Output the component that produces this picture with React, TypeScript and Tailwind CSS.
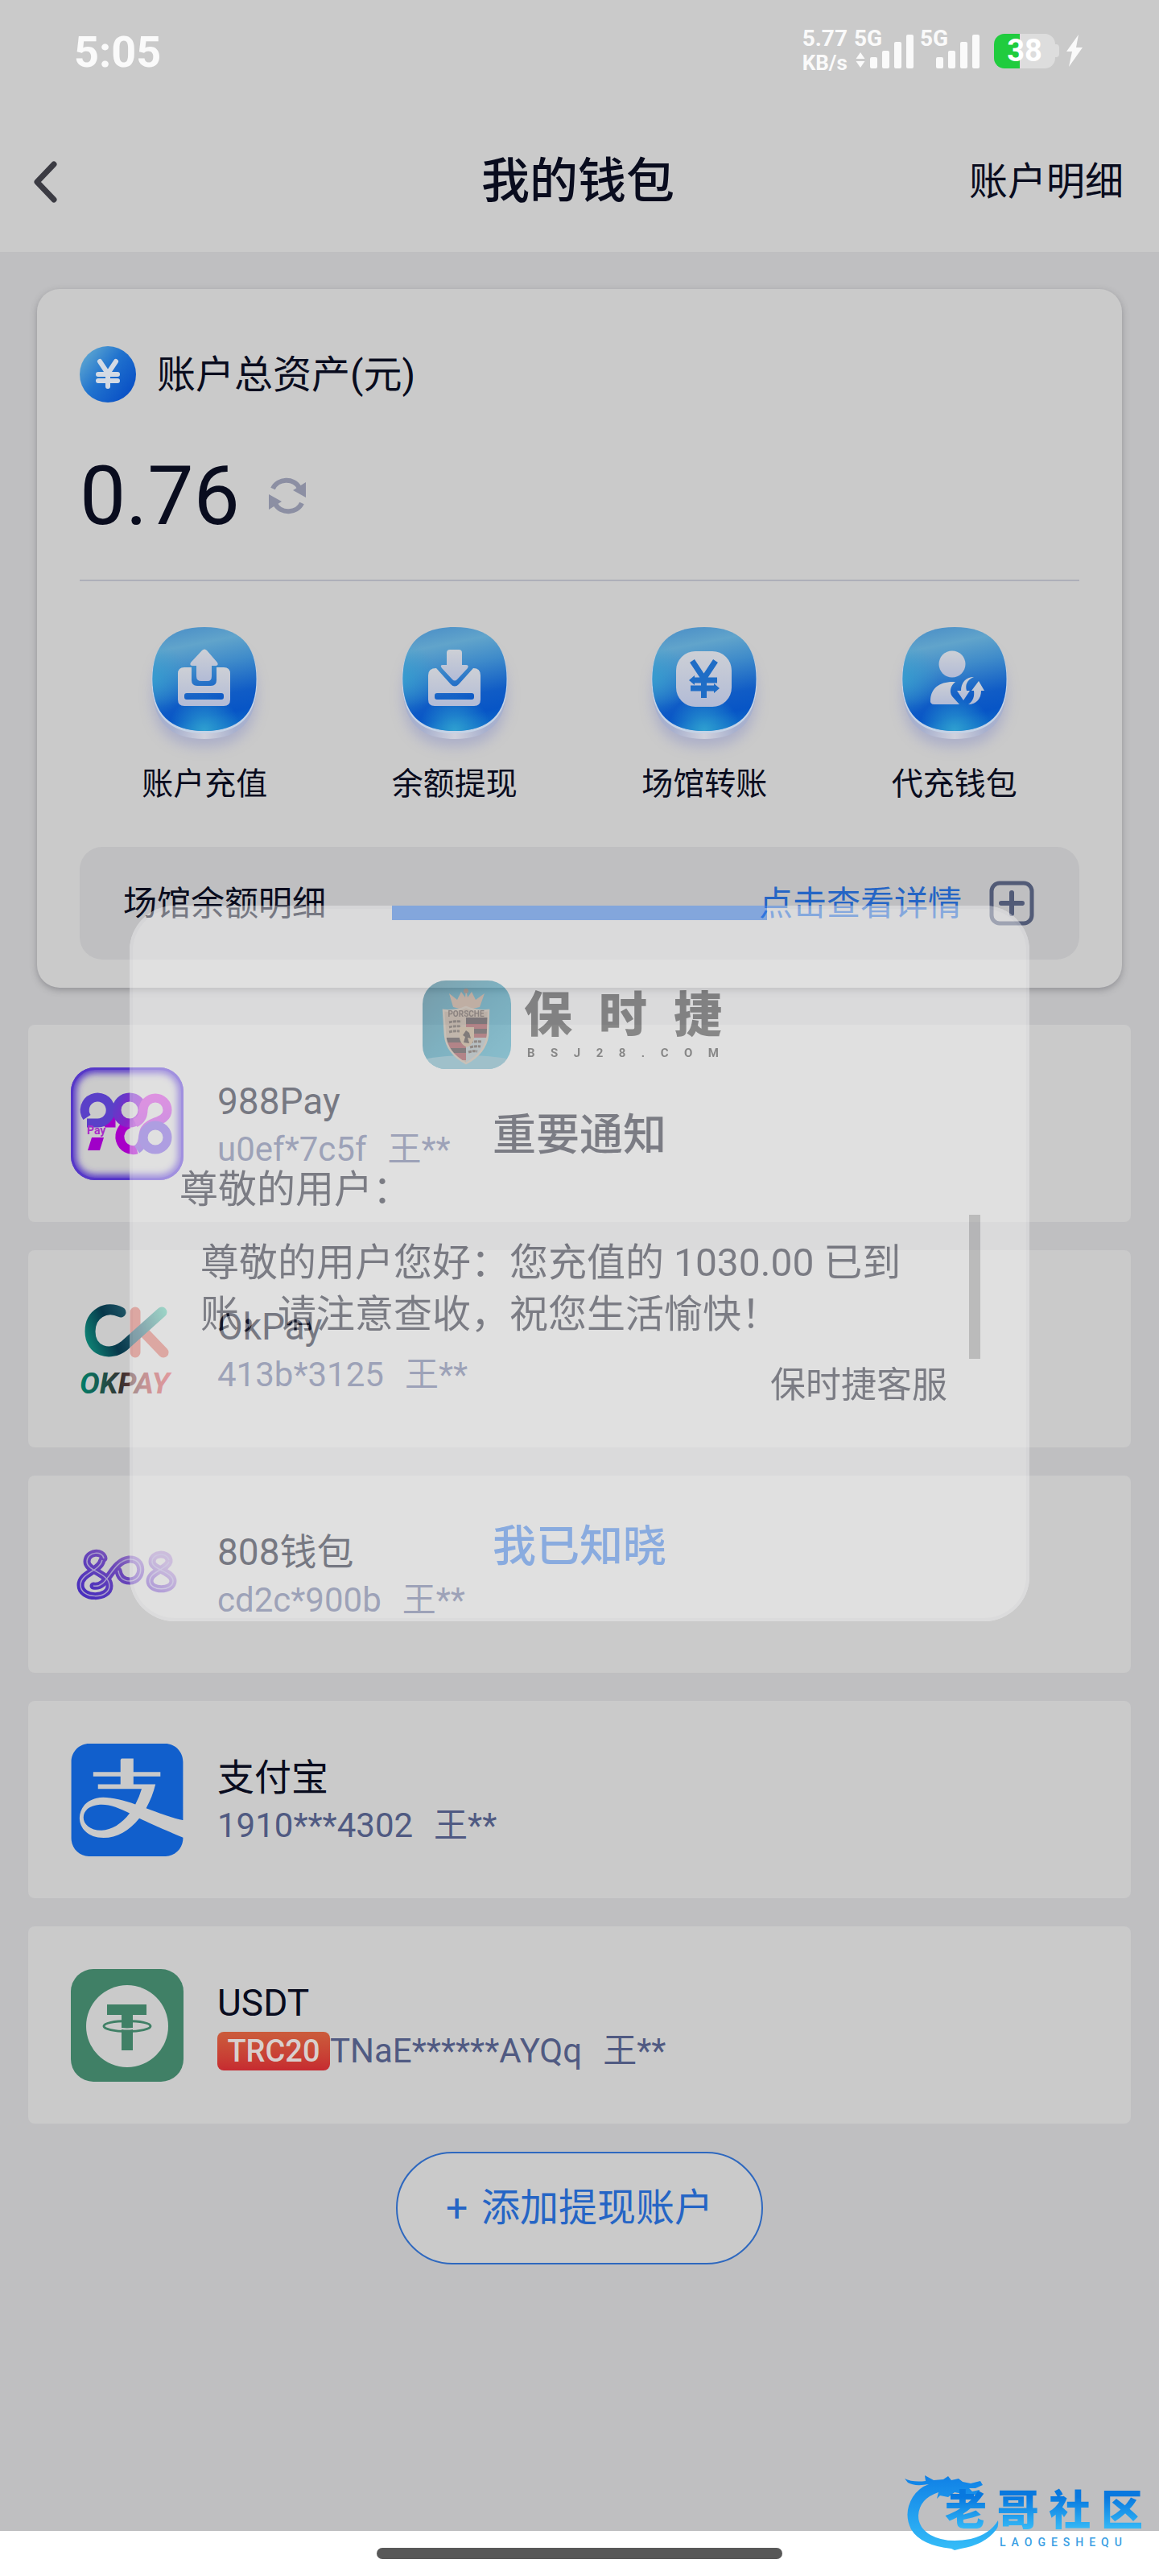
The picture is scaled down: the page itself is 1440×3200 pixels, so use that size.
import React from "react";
import { SiAlipay } from "react-icons/si";

const SQUIRCLE =
  "M75 5C118 5 139.500 26 139.500 69.500S118 134 75 134S10.500 113 10.500 69.500S32 5 75 5Z";

function SignalBars() {
  return (
    <svg viewBox="0 0 54 42" className="w-[54px] h-[42px]" fill="#fafafa">
      <rect x="0" y="28" width="9" height="14" rx="2" />
      <rect x="15" y="20" width="9" height="22" rx="2" />
      <rect x="30" y="9" width="9" height="33" rx="2" />
      <rect x="45" y="0" width="9" height="42" rx="2" />
    </svg>
  );
}

function StatusBar() {
  return (
    <div className="flex h-[126px] items-center justify-between pl-[92px] pr-[94px] text-[#fafafa] font-bold">
      <span className="pt-1 text-[54px] leading-[60px]">5:05</span>
      <div className="flex items-center">
        <div className="flex flex-col text-[28px] leading-[30px]">
          <span>5.77</span>
          <span className="text-[26px]">KB/s</span>
        </div>
        <div className="relative ml-2 flex h-[60px] w-[74px] items-end justify-end pb-2">
          <span className="absolute left-0 top-0 text-[28px] leading-[30px]">5G</span>
          <svg viewBox="0 0 12 20" className="mr-1.5 h-5 w-3" fill="#fafafa">
            <path d="M6 0L11.500 8H.5zM6 19L.5 11H11.500z" />
          </svg>
          <SignalBars />
        </div>
        <div className="relative ml-2 flex h-[60px] w-[74px] items-end justify-end pb-2">
          <span className="absolute left-0 top-0 text-[28px] leading-[30px]">5G</span>
          <SignalBars />
        </div>
        <div className="ml-[18px] flex items-center">
          <div className="flex h-[43px] w-[76px] items-center justify-center rounded-[13px] bg-[linear-gradient(90deg,#20cc3e_42%,#dddddd_42%)] text-[38px] leading-[43px] text-white">
            38
          </div>
          <div className="h-4 w-[5px] rounded-r bg-[#dddddd]" />
        </div>
        <svg viewBox="0 0 22 42" className="ml-2 h-[42px] w-[22px]" fill="#fafafa">
          <path d="M16 1L1 22h7L4 41L21 17h-8z" />
        </svg>
      </div>
    </div>
  );
}

function NavBar() {
  return (
    <div className="grid h-[187px] grid-cols-3 items-center pl-10 pr-11 pt-3 text-[#090c1e]">
      <button type="button" aria-label="返回" className="w-8">
        <svg viewBox="0 0 32 52" className="h-[52px] w-8" fill="none">
          <path
            d="M27 4L6 26L27 48"
            stroke="#3b3b43"
            strokeWidth="7"
            strokeLinecap="round"
            strokeLinejoin="round"
          />
        </svg>
      </button>
      <h1 className="text-center text-[60px] font-medium leading-[72px]">我的钱包</h1>
      <a href="#detail" className="text-right text-[48px] leading-[60px]">
        账户明细
      </a>
    </div>
  );
}

function CoinIcon() {
  return (
    <svg viewBox="0 0 70 70" className="h-[70px] w-[70px]">
      <defs>
        <linearGradient id="coin" x1="0" y1="0.1" x2="1" y2="0.9">
          <stop offset="0" stopColor="#66aed2" />
          <stop offset="0.45" stopColor="#2173ce" />
          <stop offset="1" stopColor="#0449c4" />
        </linearGradient>
      </defs>
      <circle cx="35" cy="35" r="35" fill="url(#coin)" />
      <path
        d="M25 19L35 34L45 19M35 34V50M23 35H47M23 43H47"
        fill="none"
        stroke="#d3dae4"
        strokeWidth="6"
        strokeLinecap="round"
        strokeLinejoin="round"
      />
    </svg>
  );
}

function RefreshIcon() {
  return (
    <svg viewBox="0 0 46 46" className="h-[46px] w-[46px]">
      <g fill="none" stroke="#8c8fa3" strokeWidth="6">
        <path d="M5 14C11 1 31 0 38 13" />
        <path d="M41 32C35 45 15 46 8 33" />
      </g>
      <path d="M46 6V25L30 16zM0 21V40L16 30z" fill="#8c8fa3" />
    </svg>
  );
}

function ActionShell({ id, children }: { id: string; children: React.ReactNode }) {
  return (
    <svg viewBox="0 0 150 170" className="h-[170px] w-[150px] overflow-visible">
      <defs>
        <linearGradient id={id + "-bg"} x1="0.4" y1="0" x2="0.6" y2="1">
          <stop offset="0" stopColor="#4f93c8" />
          <stop offset="0.16" stopColor="#61a4cb" />
          <stop offset="0.38" stopColor="#3f8bca" />
          <stop offset="0.68" stopColor="#105cc6" />
          <stop offset="0.85" stopColor="#0755c6" />
          <stop offset="1" stopColor="#0e6bc8" />
        </linearGradient>
        <radialGradient id={id + "-glow"} cx="0.5" cy="1" r="0.35">
          <stop offset="0" stopColor="#2fa0d0" />
          <stop offset="1" stopColor="#2fa0d0" stopOpacity="0" />
        </radialGradient>
        <radialGradient id={id + "-side"} cx="0" cy="0.5" r="0.35">
          <stop offset="0" stopColor="#35a0d0" stopOpacity="0.8" />
          <stop offset="1" stopColor="#35a0d0" stopOpacity="0" />
        </radialGradient>
        <linearGradient id={id + "-rim"} x1="0" y1="0" x2="1" y2="0">
          <stop offset="0.2" stopColor="#a6b0cf" />
          <stop offset="0.5" stopColor="#d9dae2" />
          <stop offset="0.8" stopColor="#a6b0cf" />
        </linearGradient>
        <linearGradient id={id + "-fg"} x1="0" y1="0" x2="0" y2="1">
          <stop offset="0" stopColor="#cdd0d6" />
          <stop offset="1" stopColor="#b2bbd6" />
        </linearGradient>
        <filter id={id + "-blur"} x="-30%" y="-30%" width="160%" height="160%">
          <feGaussianBlur stdDeviation="8" />
        </filter>
      </defs>
      <path d={SQUIRCLE} transform="translate(0 20)" fill="#a3a6c8" opacity="0.75" filter={`url(#${id}-blur)`} />
      <path d={SQUIRCLE} transform="translate(0 10)" fill={`url(#${id}-rim)`} opacity="0.8" />
      <path d={SQUIRCLE} transform="translate(0 2)" fill="#c5d3e6" stroke="#c5d3e6" strokeWidth="2" />
      <path d={SQUIRCLE} fill={`url(#${id}-bg)`} />
      <path d={SQUIRCLE} fill={`url(#${id}-side)`} />
      <path d={SQUIRCLE} fill={`url(#${id}-glow)`} />
      <g transform="translate(10 5)" fill={`url(#${id}-fg)`}>
        {children}
      </g>
    </svg>
  );
}

function DepositIcon() {
  return (
    <ActionShell id="deposit">
      <path d="M62 29Q65 26 68 29L81 44Q83 48 79 48H74V61Q74 67 69 67H61Q55 67 55 61V48H50Q46 48 48 44Z" />
      <path
        fillRule="evenodd"
        d="M40 50H49V66Q49 73 56 73H73Q80 73 80 66V50H89Q97 50 97 58V90Q97 98 89 98H40Q32 98 32 90V58Q32 50 40 50ZM43 82Q40 82 40 85V87Q40 90 43 90H86Q89 90 89 87V85Q89 82 86 82Z"
      />
    </ActionShell>
  );
}

function WithdrawIcon() {
  return (
    <ActionShell id="withdraw">
      <path d="M59 28H70Q74 28 74 32V47H79Q83 47 81 51L68 65Q65 68 62 65L49 51Q46 47 50 47H55V32Q55 28 59 28Z" />
      <path
        fillRule="evenodd"
        d="M42 51L60 71Q65 76 70 71L88 51Q97 51 97 60V90Q97 98 89 98H40Q32 98 32 90V60Q32 51 42 51ZM43 82Q40 82 40 85V87Q40 90 43 90H86Q89 90 89 87V85Q89 82 86 82Z"
      />
    </ActionShell>
  );
}

function TransferIcon() {
  return (
    <ActionShell id="transfer">
      <rect x="30" y="30" width="69" height="69" rx="24" />
      <path
        d="M50 42L64.500 64L79 42M64.500 62V88M53 66H81M48 76H77"
        fill="none"
        stroke="#1f6dc6"
        strokeWidth="7"
      />
      <path d="M46 66L53 60V72zM84 76L77 70V82z" fill="#1f6dc6" />
    </ActionShell>
  );
}

function ProxyIcon() {
  return (
    <ActionShell id="proxy">
      <circle cx="62" cy="46" r="16.500" />
      <path d="M66 68C60 73 58 80 62 86L71 96H40Q34 96 35 90C36 76 46 67 66 68Z" />
      <path d="M89 62C80 66 78 72 80 79H84L76 91L68 79H73C73 69 79 62 89 62Z" />
      <path d="M95 67L102 79H98C98 89 92 96 82 96C88 92 90 86 89 79H86Z" />
    </ActionShell>
  );
}

const actions = [
  { label: "账户充值", Icon: DepositIcon },
  { label: "余额提现", Icon: WithdrawIcon },
  { label: "场馆转账", Icon: TransferIcon },
  { label: "代充钱包", Icon: ProxyIcon },
];

function AssetCard() {
  return (
    <section className="mx-[46px] rounded-[28px] bg-[#cacaca] px-[53px] pb-[35px] pt-[70px] text-[#090c1e] shadow-[0_3px_8px_rgba(60,60,70,0.35)]">
      <div className="flex items-center gap-[26px]">
        <CoinIcon />
        <h2 className="pt-0.5 text-[48px] leading-[70px]">账户总资产(元)</h2>
      </div>
      <div className="mt-[59px] flex items-center gap-9">
        <span className="text-[102px] leading-[112px]">0.76</span>
        <button type="button" aria-label="刷新">
          <RefreshIcon />
        </button>
      </div>
      <hr className="mt-12 border-t-2 border-[#adafb9]" />
      <div className="mt-[52px] grid grid-cols-4">
        {actions.map(({ label, Icon }) => (
          <button type="button" key={label} className="flex flex-col items-center gap-1">
            <Icon />
            <span className="text-[39px] leading-[52px]">{label}</span>
          </button>
        ))}
      </div>
      <div className="mt-[52px] flex h-[140px] items-center rounded-[28px] bg-[#bfbfc1] pl-[54px] pr-14 text-[42px] leading-[60px]">
        <span className="pt-0.5">场馆余额明细</span>
        <a href="#venues" className="ml-auto pt-0.5 text-[#2565c5]">
          点击查看详情
        </a>
        <button type="button" aria-label="展开" className="ml-[34px]">
          <svg viewBox="0 0 56 56" className="h-14 w-14" fill="none" stroke="#525b77" strokeWidth="5">
            <rect x="3" y="3" width="50" height="50" rx="10" />
            <path d="M28 15V41M15 28H41" strokeWidth="6" strokeLinecap="round" />
          </svg>
        </button>
      </div>
    </section>
  );
}

function Pay988Logo() {
  return (
    <svg viewBox="0 0 140 140" className="h-[140px] w-[140px]">
      <defs>
        <linearGradient id="p988" gradientUnits="userSpaceOnUse" x1="55" y1="40" x2="95" y2="60">
          <stop offset="0" stopColor="#5a40c8" />
          <stop offset="0.6" stopColor="#8a20c8" />
          <stop offset="1" stopColor="#c23acb" />
        </linearGradient>
        <linearGradient id="p988b" gradientUnits="userSpaceOnUse" x1="95" y1="35" x2="110" y2="105">
          <stop offset="0" stopColor="#c63ccb" />
          <stop offset="0.5" stopColor="#b03acd" />
          <stop offset="1" stopColor="#5f50cc" />
        </linearGradient>
        <filter id="soft988">
          <feGaussianBlur stdDeviation="4" />
        </filter>
        <clipPath id="clip988">
          <rect width="140" height="140" rx="30" />
        </clipPath>
      </defs>
      <g clipPath="url(#clip988)">
        <rect width="140" height="140" fill="#cbcbcb" />
        <rect width="140" height="140" rx="30" fill="none" stroke="#5638c8" strokeWidth="14" filter="url(#soft988)" />
        <rect width="140" height="140" rx="30" fill="none" stroke="#5638c8" strokeWidth="6" />
      </g>
      <g fill="none" strokeWidth="11">
        <path d="M42 69H50V53" stroke="#a400c8" />
        <path d="M20 69H33A16 16 0 1 0 20 62" stroke="#5a40c8" />
        <path d="M82 102A16 16 0 1 1 73 70" stroke="#a800c8" />
        <circle cx="73" cy="53" r="16" stroke="url(#p988)" />
        <path d="M82 102C92 95 88 83 92 77C98 66 120 68 120 53A15 15 0 0 0 90 53C90 62 86 66 80 69" stroke="url(#p988b)" />
        <circle cx="105" cy="87" r="15" stroke="#6f52cc" />
      </g>
      <path d="M26 87H41L36 103H21z" fill="#a000c8" />
      <text x="20" y="83" fontSize="14" fontWeight="700" fill="#a82cc8">
        Pay
      </text>
    </svg>
  );
}

function OkPayLogo() {
  return (
    <svg viewBox="0 0 140 140" className="h-[140px] w-[140px]">
      <defs>
        <linearGradient id="okc" gradientUnits="userSpaceOnUse" x1="20" y1="60" x2="118" y2="20">
          <stop offset="0" stopColor="#0d7f72" />
          <stop offset="0.3" stopColor="#07374a" />
          <stop offset="0.6" stopColor="#22596a" />
          <stop offset="1" stopColor="#4fb59c" />
        </linearGradient>
        <linearGradient id="okt" x1="0" y1="0" x2="1" y2="0">
          <stop offset="0" stopColor="#00806a" />
          <stop offset="0.45" stopColor="#35302f" />
          <stop offset="0.75" stopColor="#a63f42" />
          <stop offset="1" stopColor="#cb4a52" />
        </linearGradient>
      </defs>
      <g fill="none" strokeLinecap="round" strokeWidth="13">
        <path d="M80 24V74M92 50L115 74" stroke="#c4625a" />
        <path d="M62 24C44 15 24 26 24 48C24 72 48 80 66 66L113 24" stroke="url(#okc)" />
      </g>
      <text
        x="11"
        y="125"
        fontSize="37"
        fontWeight="700"
        fontStyle="italic"
        fill="url(#okt)"
      >
        OKPAY
      </text>
    </svg>
  );
}

function Wallet808Logo() {
  const strokes = (
    <>
      <path d="M41 50C40 40 20 41 20 54C20 66 48 68 48 84C48 101 12 101 12 83C12 68 36 66 39 52" />
      <path d="M28 84C46 88 50 54 72 51C92 49 91 78 73 78C64 78 60 72 59 65" />
      <path d="M122 52C120 42 101 43 101 54C101 64 127 66 127 78C127 91 98 91 98 78C98 66 119 64 122 54" />
    </>
  );
  return (
    <svg viewBox="0 0 140 140" className="h-[140px] w-[140px]">
      <defs>
        <linearGradient id="g808" gradientUnits="userSpaceOnUse" x1="30" y1="100" x2="80" y2="30">
          <stop offset="0" stopColor="#4a2fbd" />
          <stop offset="0.55" stopColor="#6d48b8" />
          <stop offset="1" stopColor="#a68bc4" />
        </linearGradient>
      </defs>
      <g fill="none" stroke="url(#g808)" strokeWidth="9" strokeLinecap="round">
        {strokes}
      </g>
      <g fill="none" stroke="#a99fcb" strokeWidth="1.500">
        {strokes}
      </g>
    </svg>
  );
}

function UsdtLogo() {
  return (
    <svg viewBox="0 0 140 140" className="h-[140px] w-[140px]">
      <rect width="140" height="140" rx="28" fill="#408066" />
      <circle cx="70" cy="71" r="51" fill="#cacaca" />
      <g fill="#408066">
        <path d="M45 44H94V57H77V101H63V57H45z" />
      </g>
      <ellipse cx="70" cy="71" rx="29" ry="6.500" fill="none" stroke="#408066" strokeWidth="3" />
      <path d="M63 74Q70 75 77 74" stroke="#cacaca" strokeWidth="2" fill="none" />
    </svg>
  );
}

type Account = {
  name: string;
  no: string;
  owner: string;
  logo: React.ReactNode;
  tag?: string;
};

const accounts: Account[] = [
  { name: "988Pay", no: "u0ef*7c5f", owner: "王**", logo: <Pay988Logo /> },
  { name: "OkPay", no: "413b*3125", owner: "王**", logo: <OkPayLogo /> },
  { name: "808钱包", no: "cd2c*900b", owner: "王**", logo: <Wallet808Logo /> },
  {
    name: "支付宝",
    no: "1910***4302",
    owner: "王**",
    logo: <SiAlipay className="h-[140px] w-[140px] text-[#115fcc]" />,
  },
  { name: "USDT", no: "TNaE******AYQq", owner: "王**", logo: <UsdtLogo />, tag: "TRC20" },
];

function AccountList() {
  return (
    <ul className="mx-[35px] mt-[46px] flex flex-col gap-[35px]">
      {accounts.map((a) => (
        <li key={a.name} className="flex h-[245px] items-center gap-[42px] rounded-lg bg-[#cacaca] px-[53px]">
          {a.logo}
          <div className="pt-1">
            <p className="text-[46px] leading-[60px] text-[#090c1e]">{a.name}</p>
            <p className="flex items-center text-[42px] leading-[60px] text-[#505a82]">
              {a.tag && (
                <span className="flex h-12 w-[140px] items-center justify-center rounded-lg bg-linear-to-b from-[#cb5c3c] to-[#c62a30] text-[38px] font-medium leading-[48px] text-[#d8cfcd]">
                  {a.tag}
                </span>
              )}
              <span>{a.no}</span>
              <span className="ml-[26px]">{a.owner}</span>
            </p>
          </div>
        </li>
      ))}
    </ul>
  );
}

function BrandLogo() {
  return (
    <svg viewBox="0 0 110 110" className="h-[110px] w-[110px]">
      <defs>
        <linearGradient id="sky" x1="0" y1="0" x2="1" y2="1">
          <stop offset="0" stopColor="#1f6f8a" />
          <stop offset="0.5" stopColor="#2596b8" />
          <stop offset="1" stopColor="#3fb4d4" />
        </linearGradient>
        <clipPath id="tile">
          <rect width="110" height="110" rx="29" />
        </clipPath>
        <clipPath id="shield">
          <path d="M26 37Q40 39 54 33Q68 39 82 37L81 68Q78 90 54 103Q30 90 28 68Z" />
        </clipPath>
      </defs>
      <g clipPath="url(#tile)">
        <rect width="110" height="110" fill="url(#sky)" />
        <path d="M0 98Q55 88 110 98V110H0Z" fill="#6db6cc" />
      </g>
      <path
        d="M38 33L33 16L43 24L48 14L53 21L54 11L56 21L61 14L66 24L77 16L71 33Q54 38 38 33Z"
        fill="#c09a80"
      />
      <circle cx="54" cy="13" r="3" fill="#8c6a5a" />
      <g clipPath="url(#shield)">
        <rect x="20" y="30" width="70" height="80" fill="#b8a088" />
        <rect x="54" y="46" width="30" height="80" fill="#a4b4ba" />
        <rect x="54" y="46" width="30" height="8" fill="#2c2024" />
        <rect x="54" y="54" width="30" height="6" fill="#96303a" />
        <rect x="54" y="60" width="30" height="6" fill="#2c2024" />
        <rect x="54" y="66" width="30" height="5" fill="#96303a" />
        <rect x="24" y="71" width="30" height="6" fill="#2c2024" />
        <rect x="24" y="77" width="30" height="7" fill="#96303a" />
        <rect x="24" y="84" width="30" height="6" fill="#2c2024" />
        <rect x="24" y="90" width="30" height="9" fill="#96303a" />
        <path
          d="M33 52Q40 50 48 51M33 58Q40 56 48 57M33 64Q40 62 46 63M59 77Q66 75 73 76M59 83Q66 81 72 82M57 89Q62 87 68 88"
          fill="none"
          stroke="#4b3b33"
          strokeWidth="3"
          strokeDasharray="4 1"
        />
        <path d="M46 58H64V72Q62 80 55 83Q48 80 46 72Z" fill="#c0a27c" />
        <path d="M51 77L53 70L50 68L54 62L58 65L60 72L56 71L58 78Z" fill="#2a1c1a" />
      </g>
      <path
        d="M26 37Q40 39 54 33Q68 39 82 37L81 68Q78 90 54 103Q30 90 28 68Z"
        fill="none"
        stroke="#c9b8a4"
        strokeWidth="2.500"
      />
      <text x="54" y="45" textAnchor="middle" fontSize="10" fontWeight="700" fill="#4c3a32">
        PORSCHE
      </text>
    </svg>
  );
}

function NoticeDialog() {
  return (
    <div className="absolute inset-0 flex items-center px-[161px] pb-1.5">
      <div
        role="dialog"
        aria-labelledby="notice-title"
        className="relative w-full rounded-[56px] bg-[#fbfbfb] pb-[62px] pt-[93px] text-[#1c2030] opacity-45 shadow-[inset_0_0_0_4px_#f0f0f2]"
      >
        <div className="absolute left-1/2 top-0 h-[18px] w-[466px] -translate-x-1/2 bg-[#3c8afd]" />
        <div className="flex items-center justify-center gap-4 pr-[18px]">
          <BrandLogo />
          <div className="flex w-[246px] flex-col pt-1 text-[#373737]">
            <div className="flex justify-between text-[60px] font-black leading-[66px]">
              <span>保</span>
              <span>时</span>
              <span>捷</span>
            </div>
            <div className="flex justify-between px-1 text-[15px] font-bold leading-[26px]">
              {"BSJ28.COM".split("").map((c, i) => (
                <span key={i}>{c}</span>
              ))}
            </div>
          </div>
        </div>
        <h2 id="notice-title" className="mt-[53px] text-center text-[54px] font-medium leading-[60px]">
          重要通知
        </h2>
        <p className="mt-[9px] pl-[62px] text-[48px] leading-[56px]">尊敬的用户：</p>
        <div className="mt-[3px] flex gap-[50px] pl-[88px] pr-[61px]">
          <p className="flex-1 pt-7 text-[48px] leading-[64px]">
            尊敬的用户您好：您充值的 1030.00 已到账，请注意查收，祝您生活愉快！
          </p>
          <div className="h-[179px] w-3.5 bg-[#ababab]" />
        </div>
        <p className="mt-[5px] pr-[102px] text-right text-[44px] leading-[56px]">保时捷客服</p>
        <button
          type="button"
          className="mx-auto mt-[143px] block text-[54px] font-medium leading-[60px] text-[#3c86fa]"
        >
          我已知晓
        </button>
      </div>
    </div>
  );
}

function Watermark() {
  return (
    <div className="absolute bottom-[34px] right-[20px] flex w-[296px] justify-end">
      <svg viewBox="0 0 120 94" className="absolute -top-4 left-0 h-[94px] w-[120px]">
        <defs>
          <linearGradient id="dragon" x1="0" y1="0" x2="0" y2="1">
            <stop offset="0" stopColor="#0f80e6" />
            <stop offset="1" stopColor="#35bdf8" />
          </linearGradient>
        </defs>
        <path
          fill="url(#dragon)"
          d="M0 5Q10 10 26 8L25 1L36 7L48 6L54 2L58 7L67 5L72 9L82 11L94 8L97 13L88 17L80 17L84 21L93 19L92 25L82 25L72 24L62 22L54 28L44 26L40 30L42 22Q18 30 17 51Q17 66 32 75Q52 86 82 80Q106 74 116 57Q117 64 114 68Q100 87 70 92L62 94L58 92Q20 88 8 68Q-2 48 10 28Q18 16 30 12Q12 15 4 10Z"
        />
      </svg>
      <div className="relative w-[246px]">
        <div className="flex justify-between bg-linear-to-b from-[#0878df] from-20% to-[#38bdf8] to-90% bg-clip-text text-[52px] font-black leading-[60px] text-transparent">
          <span>老</span>
          <span>哥</span>
          <span>社</span>
          <span>区</span>
        </div>
        <div className="ml-[68px] mr-[26px] flex justify-between text-[14px] font-medium leading-4 text-[#3a9fe4]">
          {"LAOGESHEQU".split("").map((c, i) => (
            <span key={i}>{c}</span>
          ))}
        </div>
      </div>
    </div>
  );
}

export default function App() {
  return (
    <div className="relative flex min-h-screen flex-col bg-white font-['Roboto','Noto_Sans_CJK_SC',sans-serif]">
      <div className="relative flex flex-1 flex-col bg-[#bfbfc1]">
        <header className="bg-[#cacaca]">
          <StatusBar />
          <NavBar />
        </header>
        <main className="flex flex-col pt-[46px]">
          <AssetCard />
          <AccountList />
          <button
            type="button"
            className="mx-auto mt-[35px] flex h-[140px] items-center gap-[17px] rounded-full border-2 border-[#2e68bf] bg-[#cacaca] px-[60px] text-[48px] leading-[60px] text-[#2565c5]"
          >
            <span>+</span>
            <span>添加提现账户</span>
          </button>
        </main>
        <NoticeDialog />
      </div>
      <footer className="flex h-14 items-center justify-center">
        <div className="h-3.5 w-[504px] rounded-full bg-[#585858]" />
      </footer>
      <Watermark />
    </div>
  );
}
